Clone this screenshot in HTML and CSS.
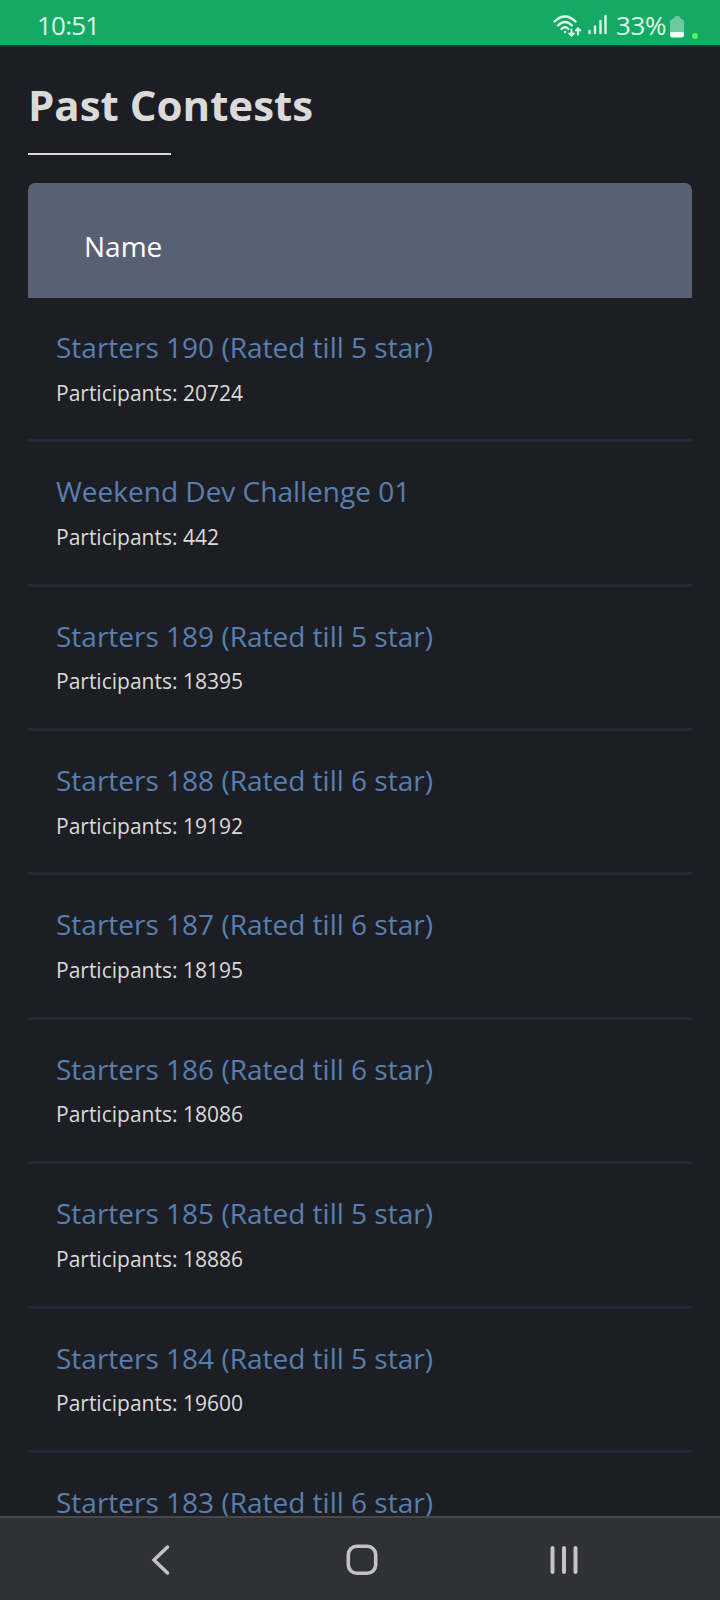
FILE: index.html
```
<!DOCTYPE html>
<html lang="en">
<head>
    <meta charset="UTF-8">
    <meta name="viewport" content="width=device-width, initial-scale=1.0">
    <title>Past Contests</title>
    <link rel="stylesheet" href="styles.css">
</head>
<body>
    <header class="status-bar">
        <span class="time">10:51</span>
        <div class="status-icons">
            <svg class="wifi" width="29" height="24" viewBox="0 0 29 24" fill="none" stroke="#d9fbe8" stroke-width="2.300" stroke-linecap="round">
                <path d="M1.500 7.500C8 .8 16 .8 22.500 7.500"/>
                <path d="M5 11.500C9.500 6.800 14.500 6.800 19 11.500"/>
                <path d="M8.500 15C11 12.600 13 12.600 15.500 15"/>
                <circle cx="12" cy="18" r="1.300" fill="#d9fbe8" stroke="none"/>
                <path d="M18.500 15.500V21.500M16.300 19.500L18.500 21.700L20.700 19.500M25 20.500V14.500M22.800 16.500L25 14.300L27.200 16.500" stroke-width="2"/>
            </svg>
            <svg class="signal" width="19" height="22" viewBox="0 0 19 22" fill="none" stroke="#d9fbe8" stroke-width="2.400" stroke-linecap="round">
                <path d="M1.500 17V19M7 12.500V19M12.500 7V19M17.500 2V19"/>
            </svg>
            <span class="percent">33%</span>
            <svg class="battery" width="14" height="22" viewBox="0 0 14 22">
                <path d="M4 2Q4 0 6 0H8Q10 0 10 2L12 3Q14 4 14 6V16H0V6Q0 4 2 3Z" fill="#6bca9b"/>
                <path d="M0 16H14V19.500Q14 21.500 12 21.500H2Q0 21.500 0 19.500Z" fill="#eefff6"/>
            </svg>
            <span class="dot"></span>
        </div>
    </header>

    <main>
        <h1>Past Contests</h1>
        <div class="title-line"></div>
        <div class="table-head">Name</div>
        <div class="contest">
            <a class="contest-name">Starters 190 (Rated till 5 star)</a>
            <p>Participants: 20724</p>
        </div>
        <div class="contest">
            <a class="contest-name">Weekend Dev Challenge 01</a>
            <p>Participants: 442</p>
        </div>
        <div class="contest">
            <a class="contest-name">Starters 189 (Rated till 5 star)</a>
            <p>Participants: 18395</p>
        </div>
        <div class="contest">
            <a class="contest-name">Starters 188 (Rated till 6 star)</a>
            <p>Participants: 19192</p>
        </div>
        <div class="contest">
            <a class="contest-name">Starters 187 (Rated till 6 star)</a>
            <p>Participants: 18195</p>
        </div>
        <div class="contest">
            <a class="contest-name">Starters 186 (Rated till 6 star)</a>
            <p>Participants: 18086</p>
        </div>
        <div class="contest">
            <a class="contest-name">Starters 185 (Rated till 5 star)</a>
            <p>Participants: 18886</p>
        </div>
        <div class="contest">
            <a class="contest-name">Starters 184 (Rated till 5 star)</a>
            <p>Participants: 19600</p>
        </div>
        <div class="contest">
            <a class="contest-name">Starters 183 (Rated till 6 star)</a>
        </div>
    </main>

    <nav class="nav-bar">
        <svg width="32" height="32" viewBox="0 0 32 32" fill="none" stroke="#c3c3c5" stroke-width="3.500">
            <path d="M23.500 3L10 16L23.500 29" stroke-linecap="round" stroke-linejoin="miter"/>
        </svg>
        <svg width="32" height="32" viewBox="0 0 32 32" fill="none" stroke="#c3c3c5" stroke-width="3.600">
            <rect x="2.300" y="2.300" width="27.400" height="27" rx="8.500"/>
        </svg>
        <svg width="32" height="32" viewBox="0 0 32 32" fill="none" stroke="#c3c3c5" stroke-width="4" stroke-linecap="round">
            <path d="M4.500 4V28M16 4V28M27.500 4V28"/>
        </svg>
    </nav>
</body>
</html>
```
FILE: styles.css
```
* {
    box-sizing: border-box;
}
body {
    font-family: "Open Sans", "Noto Sans", sans-serif;
    margin: 0;
    height: 1600px;
    background: #1d1e23;
    color: #dadada;
    display: flex;
    flex-direction: column;
    overflow: hidden;
}
.status-bar {
    height: 47px;
    flex: none;
    background: #16a965;
    border-bottom: 2px solid #183a32;
    color: #d9fbe8;
    display: flex;
    justify-content: space-between;
    padding: 5px 22px 0 37px;
    font-size: 26px;
    line-height: 40px;
    font-weight: 500;
}
.time {
    letter-spacing: -0.8px;
}
.status-icons {
    display: flex;
    align-items: flex-start;
}
.wifi {
    margin: 9px 6px 0 0;
}
.signal {
    margin: 9px 9px 0 0;
}
.percent {
    letter-spacing: -0.4px;
}
.battery {
    margin: 11px 8px 0 4px;
}
.dot {
    width: 6px;
    height: 6px;
    border-radius: 50%;
    background: #4dfb5c;
    margin-top: 28px;
}
main {
    flex: 1;
    min-height: 0;
    overflow: hidden;
    padding: 30px 28px 0;
}
h1 {
    margin: 0;
    font-size: 42px;
    line-height: 56px;
    font-weight: bold;
}
.title-line {
    width: 143px;
    height: 2px;
    margin: 20px 0 28px;
    background: #dadada;
}
.table-head {
    height: 115px;
    padding: 44px 56px 0;
    border-radius: 7px 7px 0 0;
    background: #586174;
    color: #fff;
    font-size: 28px;
    line-height: 38px;
}
.contest {
    height: 144.37px;
    padding: 30px 28px 0;
    border-bottom: 3px solid #232a37;
}
.contest-name {
    display: block;
    color: #587fb0;
    font-size: 28px;
    line-height: 38px;
}
.contest p {
    margin: 11.7px 0 0;
    font-size: 21px;
    line-height: 30px;
}
.nav-bar {
    height: 84px;
    flex: none;
    border-top: 2px solid #47484b;
    background: #303134;
    display: flex;
    justify-content: center;
    align-items: center;
    gap: 170px;
    padding: 2px 0 0 4px;
}
```
